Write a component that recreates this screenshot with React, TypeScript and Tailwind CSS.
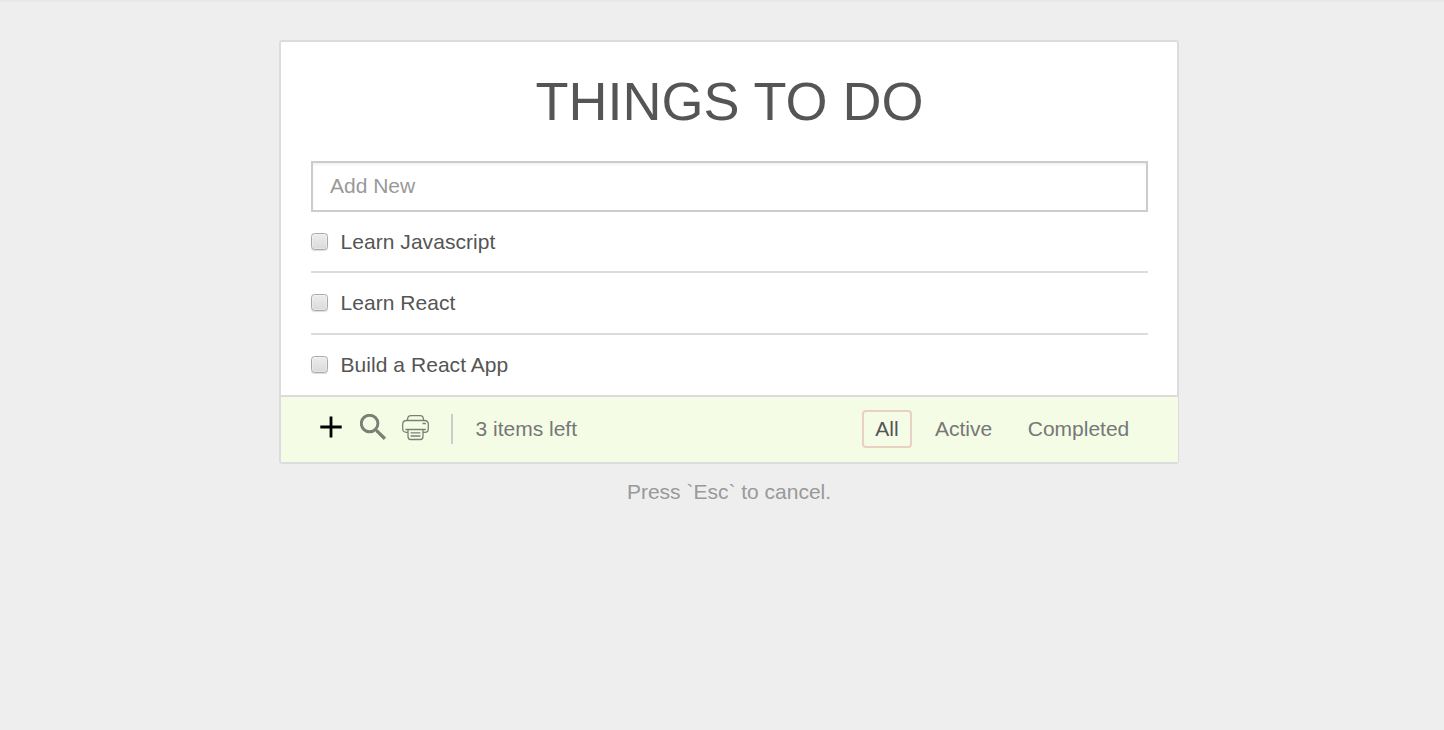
import { useState } from "react";

const PlusIcon = () => (
  <svg width="22" height="22" viewBox="0 0 22 22" fill="none" stroke="#000" strokeWidth="2.8">
    <path d="M11 0.5V21.5M0.3 11H21.7" />
  </svg>
);

const SearchIcon = () => (
  <svg width="27" height="27" viewBox="0 0 27 27" fill="none" stroke="#7b8075">
    <circle cx="9.6" cy="9.5" r="8.3" strokeWidth="2.9" />
    <path d="M15.4 15.4L17.4 17.4" strokeWidth="2.4" />
    <path d="M16.6 16.6L24.9 24.7" strokeWidth="3.4" />
  </svg>
);

const PrinterIcon = () => (
  <svg width="28" height="26" viewBox="0 0 28 26" fill="none" stroke="#7b8075" strokeWidth="1.3">
    <path d="M5.5 5.5V4.5C5.7 1.8 7 0.7 9 0.7H18.2C20.2 0.7 21.3 1.8 21.5 4.5V5.5" />
    <path d="M6 17.3H4.2C2 17.3 0.7 16 0.7 14V9.4C0.7 7 2.2 5.5 4.6 5.5H22.4C24.8 5.5 26.3 7 26.3 9.4V14C26.3 16 25 17.3 22.8 17.3H21" />
    <path d="M3.4 14.5H23.8M6 14.5V21.5C6 23.5 6.8 24.5 8.6 24.5H18.4C20.2 24.5 21 23.5 21 21.5V14.5" />
    <path d="M8.6 17.8H18.4M8.6 21H18.4M20.5 8.5H23.8" />
  </svg>
);

const Checkbox = ({ checked, onChange }: { checked: boolean; onChange: () => void }) => (
  <input
    type="checkbox"
    checked={checked}
    onChange={onChange}
    className="size-[17px] shrink-0 appearance-none rounded-[3.5px] border-[1.5px] border-[#a9a9a9] bg-linear-to-b from-[#ededed] to-[#dadada] shadow-[0_1px_1px_rgba(0,0,0,0.14),inset_0_0_0_1px_rgba(255,255,255,0.3)] checked:bg-[#999]"
  />
);

const rows = [
  { label: "Learn Javascript", style: "h-[61px] border-b-2" },
  { label: "Learn React", style: "h-[62px] border-b-2 pb-px" },
  { label: "Build a React App", style: "h-[60px] pb-px" },
];

const filters = [
  { label: "All", style: "w-[50px]" },
  { label: "Active", style: "ml-[10px] w-[83px]" },
  { label: "Completed", style: "ml-[10px] w-[127px]" },
];

export default function App() {
  const [done, setDone] = useState([false, false, false]);
  const [filter, setFilter] = useState("All");
  const toggle = (i: number) => setDone(done.map((d, j) => (i === j ? !d : d)));

  return (
    <div className="min-h-screen bg-[#eee] bg-linear-to-b from-[#e6e6e6] to-[#eee] to-[3px] pt-10 pl-[279px] font-['Liberation_Sans',Arial,sans-serif] text-[21px] leading-[30px] text-[#555]">
      <main className="w-[900px] rounded-[3px] border-2 border-[#dcdcdc] bg-white">
        <div className="px-[30px] pr-[29px]">
          <h1 className="h-[119px] pt-[29px] text-center text-[54px] leading-[60px]">THINGS TO DO</h1>
          <input
            placeholder="Add New"
            className="block h-[51px] w-full border-2 border-[#ccc] px-[17px] pb-[2px] shadow-[inset_0_2px_2px_rgba(0,0,0,0.05)] outline-none placeholder:text-[#999]"
          />
          <ul>
            {rows.map(({ label, style }, i) => (
              <li key={label} className={`flex items-center border-[#dcdcdc] ${style}`}>
                <label className="flex items-center gap-[12.5px]">
                  <Checkbox checked={done[i]} onChange={() => toggle(i)} />
                  <span className="tracking-[0.05px]">{label}</span>
                </label>
              </li>
            ))}
          </ul>
        </div>
        <footer className="-mr-px flex h-[67px] items-start border-t-2 border-[#dcdcdc] bg-[#f4fce6] pt-[13px] pr-[36px] pl-[39px] text-[#777]">
          <button className="mt-[6px] mr-[18px]"><PlusIcon /></button>
          <button className="mt-[4px] mr-[15px]"><SearchIcon /></button>
          <button className="mt-[5px]"><PrinterIcon /></button>
          <span className="mt-[4px] ml-[21px] h-[30px] border-l-2 border-[#ccc] pl-[22.5px]">
            {done.filter((d) => !d).length} items left
          </span>
          <nav className="ml-auto flex">
            {filters.map(({ label, style }) => (
              <button
                key={label}
                onClick={() => setFilter(label)}
                className={`h-[38px] rounded-[4px] border-2 text-center ${style} ${
                  filter === label ? "border-[#e8d0c3] text-[#555]" : "border-transparent"
                }`}
              >
                {label}
              </button>
            ))}
          </nav>
        </footer>
      </main>
      <p className="w-[900px] pt-[13px] text-center text-[#999]">Press `Esc` to cancel.</p>
    </div>
  );
}
